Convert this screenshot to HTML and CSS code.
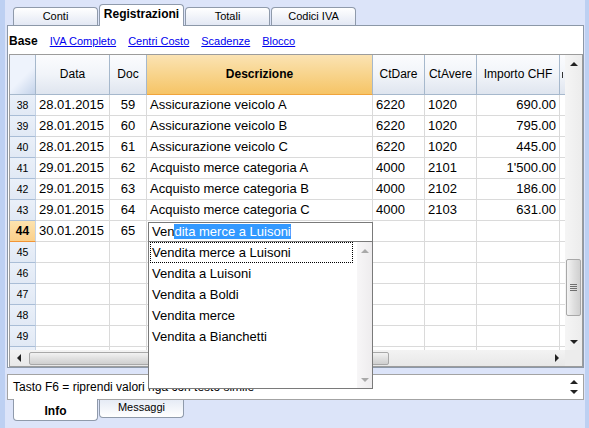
FILE: index.html
```html
<!DOCTYPE html>
<html lang="it">
<head>
    <meta charset="UTF-8">
    <meta name="viewport" content="width=device-width, initial-scale=1.0">
    <title>Registrazioni</title>
    <link rel="stylesheet" href="styles.css">
</head>
<body>
    <div class="app">
        <div class="tabs">
            <div class="tab">Conti</div>
            <div class="tab active">Registrazioni</div>
            <div class="tab">Totali</div>
            <div class="tab">Codici IVA</div>
        </div>

        <div class="panel">
            <div class="views">
                <b>Base</b>
                <a href="#">IVA Completo</a>
                <a href="#">Centri Costo</a>
                <a href="#">Scadenze</a>
                <a href="#">Blocco</a>
            </div>

            <div class="table-box">
                <div class="table-main">
                    <div class="grid">
                        <div class="h corner"></div>
                        <div class="h">Data</div>
                        <div class="h">Doc</div>
                        <div class="h current">Descrizione</div>
                        <div class="h">CtDare</div>
                        <div class="h">CtAvere</div>
                        <div class="h">Importo CHF</div>
                        <div class="h cut"></div>

                        <div class="n">38</div><div class="c">28.01.2015</div><div class="c mid">59</div><div class="c">Assicurazione veicolo A</div><div class="c">6220</div><div class="c">1020</div><div class="c num">690.00</div><div class="c"></div>
                        <div class="n">39</div><div class="c">28.01.2015</div><div class="c mid">60</div><div class="c">Assicurazione veicolo B</div><div class="c">6220</div><div class="c">1020</div><div class="c num">795.00</div><div class="c"></div>
                        <div class="n">40</div><div class="c">28.01.2015</div><div class="c mid">61</div><div class="c">Assicurazione veicolo C</div><div class="c">6220</div><div class="c">1020</div><div class="c num">445.00</div><div class="c"></div>
                        <div class="n">41</div><div class="c">29.01.2015</div><div class="c mid">62</div><div class="c">Acquisto merce categoria A</div><div class="c">4000</div><div class="c">2101</div><div class="c num">1'500.00</div><div class="c"></div>
                        <div class="n">42</div><div class="c">29.01.2015</div><div class="c mid">63</div><div class="c">Acquisto merce categoria B</div><div class="c">4000</div><div class="c">2102</div><div class="c num">186.00</div><div class="c"></div>
                        <div class="n">43</div><div class="c">29.01.2015</div><div class="c mid">64</div><div class="c">Acquisto merce categoria C</div><div class="c">4000</div><div class="c">2103</div><div class="c num">631.00</div><div class="c"></div>
                        <div class="n active">44</div><div class="c">30.01.2015</div><div class="c mid">65</div><div class="c"></div><div class="c"></div><div class="c"></div><div class="c"></div><div class="c"></div>
                        <div class="n">45</div><div class="c"></div><div class="c"></div><div class="c"></div><div class="c"></div><div class="c"></div><div class="c"></div><div class="c"></div>
                        <div class="n">46</div><div class="c"></div><div class="c"></div><div class="c"></div><div class="c"></div><div class="c"></div><div class="c"></div><div class="c"></div>
                        <div class="n">47</div><div class="c"></div><div class="c"></div><div class="c"></div><div class="c"></div><div class="c"></div><div class="c"></div><div class="c"></div>
                        <div class="n">48</div><div class="c"></div><div class="c"></div><div class="c"></div><div class="c"></div><div class="c"></div><div class="c"></div><div class="c"></div>
                        <div class="n">49</div><div class="c"></div><div class="c"></div><div class="c"></div><div class="c"></div><div class="c"></div><div class="c"></div><div class="c"></div>
                        <div class="n"></div><div class="c"></div><div class="c"></div><div class="c"></div><div class="c"></div><div class="c"></div><div class="c"></div><div class="c"></div>
                    </div>
                    <div class="hscroll">
                        <div class="sbtn"><span class="arrow left"></span></div>
                        <div class="hthumb"></div>
                        <div class="sbtn push"><span class="arrow right"></span></div>
                    </div>
                </div>

                <div class="vscroll">
                    <div class="sbtn"><span class="arrow up"></span></div>
                    <div class="vtrack">
                        <div class="vthumb"><span class="grip"></span></div>
                    </div>
                    <div class="sbtn"><span class="arrow down"></span></div>
                    <div class="sc-corner"></div>
                </div>

                <!-- autocomplete on the Descrizione cell of row 44 -->
                <div class="editor">Ven<span class="sel">dita merce a Luisoni</span></div>
                <div class="suggest">
                    <ul class="suggest-list">
                        <li class="focus">Vendita merce a Luisoni</li>
                        <li>Vendita a Luisoni</li>
                        <li>Vendita a Boldi</li>
                        <li>Vendita merce</li>
                        <li>Vendita a Bianchetti</li>
                    </ul>
                    <div class="suggest-scroll">
                        <span class="arrow up grey"></span>
                        <span class="arrow down grey"></span>
                    </div>
                </div>
            </div>
        </div>

        <div class="info-box">
            <span>Tasto F6 = riprendi valori riga con testo simile</span>
            <div class="info-arrows">
                <span class="arrow up"></span>
                <span class="arrow down"></span>
            </div>
        </div>

        <div class="bottom-tabs">
            <div class="btab active">Info</div>
            <div class="btab">Messaggi</div>
        </div>
    </div>
</body>
</html>
```

FILE: styles.css
```css
body {
    margin: 0;
    font-family: "Liberation Sans", Arial, sans-serif;
    color: #000;
    background-color: #dce4f9;
}

.app {
    height: 428px;
    border-left: 5px solid #bdd0f2;
    border-right: 4px solid #bdd0f2;
    background-color: #dce4f9;
    overflow: hidden;
}

/* top tabs */
.tabs {
    display: flex;
    align-items: flex-end;
    gap: 1px;
    height: 25px;
    padding-left: 8px;
}

.tab {
    width: 85px;
    height: 18px;
    box-sizing: border-box;
    border: 1px solid #8f9aab;
    border-bottom: none;
    border-radius: 4px 4px 0 0;
    background: linear-gradient(#ffffff, #e3e8f4);
    font-size: 11px;
    line-height: 17px;
    text-align: center;
}

.tab.active {
    position: relative;
    z-index: 1;
    height: 22px;
    margin-bottom: -1px;
    background: #fff;
    font-weight: bold;
    font-size: 12px;
    line-height: 19px;
}

/* main panel */
.panel {
    width: 577px;
    margin-left: 2px;
    box-sizing: border-box;
    border: 1px solid #8c98a8;
    background-color: #fff;
}

.views {
    display: flex;
    align-items: center;
    gap: 12px;
    height: 28px;
    padding: 2px 0 0 1px;
    box-sizing: border-box;
    font-size: 11px;
}

.views b {
    font-size: 12px;
}

.views a {
    color: #0000ee;
}

.table-box {
    position: relative;
    display: flex;
    width: 574px;
    margin-left: 1px;
    box-sizing: border-box;
    border: 1px solid #9c9c9c;
}

.table-main {
    width: 555px;
}

.grid {
    display: grid;
    grid-template-columns: 26px 74px 37px 226px 52px 52px 83px 5px;
    grid-template-rows: 40px;
    grid-auto-rows: 21px;
    height: 295px;
    overflow: hidden;
}

.h {
    box-sizing: border-box;
    border-right: 1px solid #a6b8cc;
    border-bottom: 1px solid #a6b8cc;
    background: linear-gradient(#fbfcfe, #f1f4f9 50%, #dfe5ef);
    font-size: 12px;
    line-height: 39px;
    text-align: center;
    white-space: nowrap;
    overflow: hidden;
}

.h.corner {
    background: linear-gradient(135deg, #eef3fc 55%, #c4d3ea);
}

.h.current {
    border-bottom-color: #f0a43c;
    background: linear-gradient(#fbe3b3, #f8d48c 50%, #f6c466);
    font-weight: bold;
}

/* next column, only its first pixels are visible */
.h.cut {
    border-right: none;
    padding: 17px 0 0 2px;
}

.h.cut::before {
    content: "";
    display: block;
    width: 1px;
    height: 6px;
    background-color: #333;
}

.c {
    box-sizing: border-box;
    border-right: 1px solid #dadada;
    border-bottom: 1px solid #dadada;
    padding: 0 3px;
    font-size: 13px;
    line-height: 20px;
    white-space: nowrap;
    overflow: hidden;
}

.c.mid {
    text-align: center;
}

.c.num {
    text-align: right;
}

.n {
    box-sizing: border-box;
    border-right: 1px solid #c5d3e5;
    border-bottom: 1px solid #a9bdd6;
    background: linear-gradient(#eaf0f9, #e1e9f5);
    font-size: 10.5px;
    line-height: 20px;
    text-align: center;
}

.n.active {
    border-bottom-color: #f29536;
    background: linear-gradient(#fde3ae, #fbd08a);
    font-weight: bold;
    font-size: 12px;
}

/* scrollbars */
.hscroll {
    display: flex;
    align-items: center;
    height: 16px;
    background: linear-gradient(#f3f3f3, #e8e8e8);
}

.sbtn {
    display: flex;
    align-items: center;
    justify-content: center;
    width: 17px;
    height: 17px;
    flex-shrink: 0;
}

.sbtn.push {
    margin-left: auto;
}

.hthumb {
    width: 360px;
    height: 13px;
    margin-left: 2px;
    box-sizing: border-box;
    border: 1px solid #a8a8a8;
    border-radius: 2px;
    background: linear-gradient(#f2f2f2, #dedede 55%, #cfcfcf);
}

.vscroll {
    display: flex;
    flex-direction: column;
    width: 17px;
    background: linear-gradient(90deg, #f5f5f5, #ececec);
}

.vtrack {
    height: 261px;
}

.vthumb {
    display: flex;
    align-items: center;
    justify-content: center;
    width: 15px;
    height: 57px;
    margin: 187px 0 0 1px;
    box-sizing: border-box;
    border: 1px solid #a8a8a8;
    border-radius: 2px;
    background: linear-gradient(90deg, #f3f3f3, #dedede 55%, #d0d0d0);
}

.grip {
    width: 7px;
    height: 7px;
    background: repeating-linear-gradient(#6f6f6f 0 1px, transparent 1px 2px);
}

.sc-corner {
    flex: 1;
    background-color: #ececec;
}

.arrow {
    display: block;
    width: 0;
    height: 0;
    border: 4px solid transparent;
}

.arrow.up {
    border-top: none;
    border-bottom-color: #222;
}

.arrow.down {
    border-bottom: none;
    border-top-color: #222;
}

.arrow.left {
    border-left: none;
    border-right-color: #222;
}

.arrow.right {
    border-right: none;
    border-left-color: #222;
}

.arrow.up.grey {
    border-bottom-color: #a9a9a9;
}

.arrow.down.grey {
    border-top-color: #a9a9a9;
}

/* autocomplete popup */
.editor {
    position: absolute;
    left: 138px;
    top: 167px;
    width: 225px;
    height: 20px;
    box-sizing: border-box;
    border: 1px solid #7a7a7a;
    padding-left: 3px;
    background-color: #fff;
    font-size: 13px;
    line-height: 18px;
    white-space: nowrap;
}

.sel {
    background-color: #3399ff;
    color: #fff;
}

.suggest {
    position: absolute;
    z-index: 2;
    left: 138px;
    top: 186px;
    display: flex;
    width: 225px;
    height: 148px;
    box-sizing: border-box;
    border: 1px solid #7a7a7a;
    background-color: #fff;
}

.suggest-list {
    flex: 1;
    margin: 0;
    padding: 0;
    list-style: none;
}

.suggest-list li {
    height: 21px;
    padding-left: 3px;
    font-size: 13px;
    line-height: 21px;
    white-space: nowrap;
}

.suggest-list li.focus {
    margin: 0 4px 0 1px;
    padding-left: 1px;
    height: 19px;
    line-height: 19px;
    border: 1px dotted #000;
}

.suggest-scroll {
    display: flex;
    flex-direction: column;
    justify-content: space-between;
    align-items: center;
    width: 15px;
    padding: 7px 0 6px;
    box-sizing: border-box;
    background: linear-gradient(90deg, #f7f6f7, #eeecee);
}

/* info area */
.info-box {
    display: flex;
    align-items: center;
    justify-content: space-between;
    width: 577px;
    height: 26px;
    margin: 6px 0 0 2px;
    padding: 0 3px 0 5px;
    box-sizing: border-box;
    border: 1px solid #a3a3a3;
    background-color: #fff;
    font-size: 12px;
}

.info-arrows {
    display: flex;
    flex-direction: column;
    gap: 6px;
    padding: 0 2px;
}

.bottom-tabs {
    display: flex;
    align-items: flex-start;
    gap: 1px;
    padding-left: 8px;
}

.btab {
    width: 85px;
    height: 18px;
    box-sizing: border-box;
    border: 1px solid #8f9aab;
    border-top: none;
    border-radius: 0 0 4px 4px;
    background: linear-gradient(#e6ebf5, #ffffff);
    font-size: 11px;
    line-height: 15px;
    text-align: center;
}

.btab.active {
    position: relative;
    height: 22px;
    margin-top: -1px;
    background: #fff;
    font-weight: bold;
    font-size: 12px;
    line-height: 24px;
}
```
